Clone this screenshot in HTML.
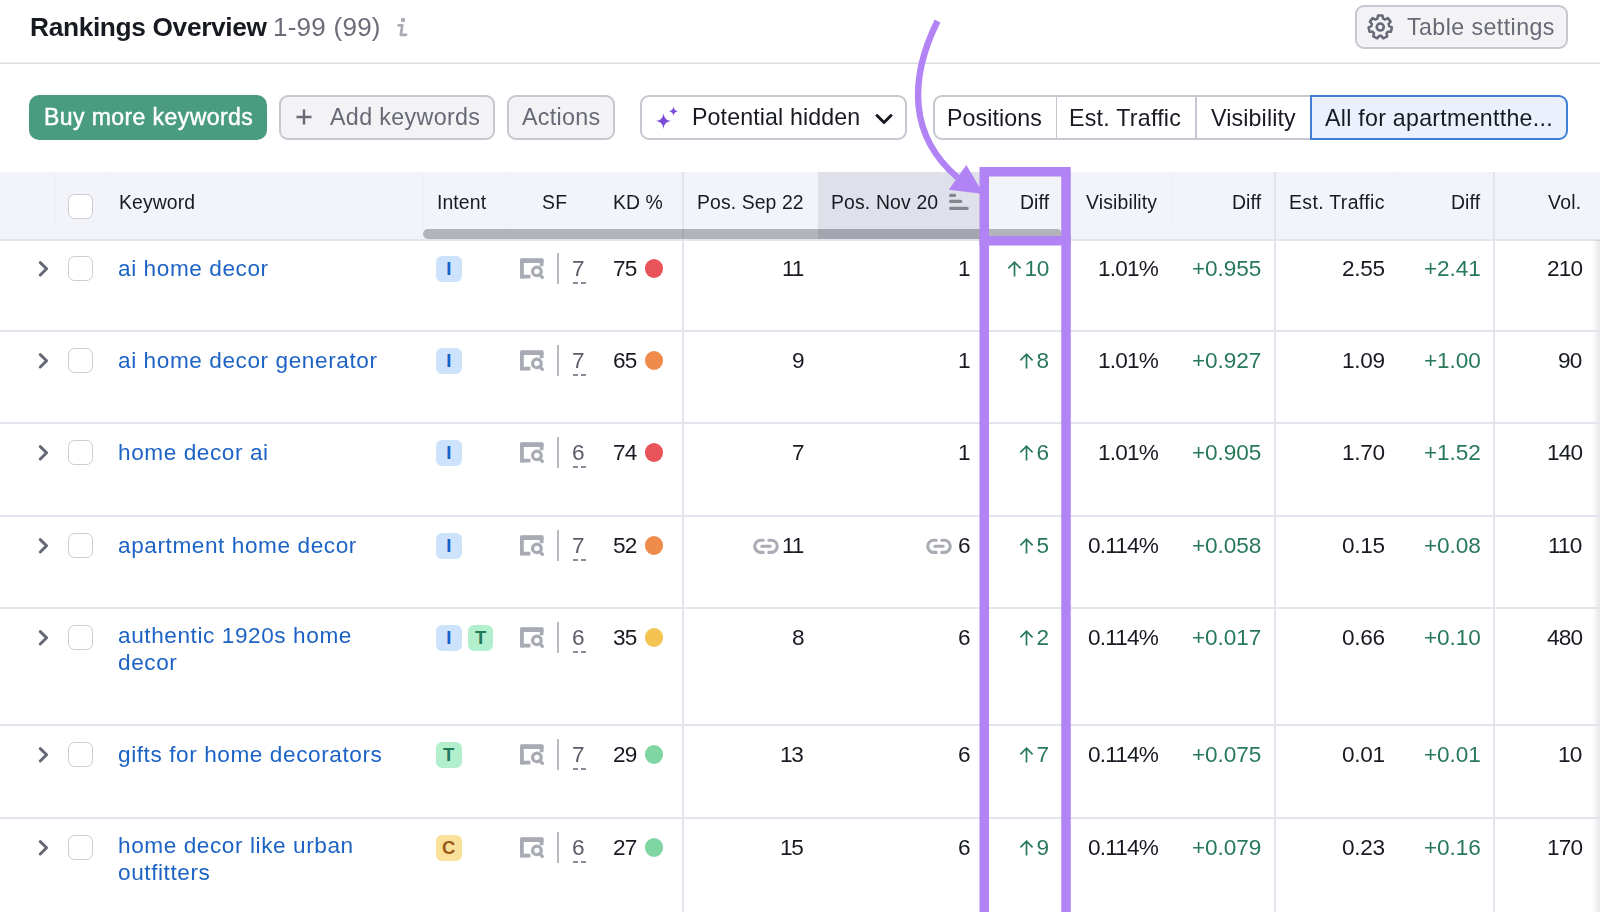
<!DOCTYPE html>
<html><head><meta charset="utf-8"><title>Rankings Overview</title>
<style>
html,body{margin:0;padding:0;}
body{width:1600px;height:912px;overflow:hidden;position:relative;background:#fff;font-family:"Liberation Sans",sans-serif;}
.t{position:absolute;white-space:nowrap;will-change:transform;}
.r{position:absolute;}
.badge{width:25.5px;height:25.7px;border-radius:6px;font-weight:bold;font-size:18.5px;line-height:26.5px;text-align:center;}
.arr{vertical-align:-1px;margin-right:2.6px;}
</style></head><body>
<div class="t" style="top:9.88px;font-size:26.3px;line-height:34px;color:#181a22;font-weight:bold;letter-spacing:-0.35px;left:29.50px;">Rankings Overview</div>
<div class="t" style="top:9.99px;font-size:26px;line-height:34px;color:#6b6d79;letter-spacing:0.25px;left:272.50px;">1-99 (99)</div>
<svg class="r" style="left:394px;top:15px" width="18" height="24" viewBox="0 0 18 24"><circle cx="9" cy="5" r="2.2" fill="#a9abb5"/><path d="M4.6 10.4H8.3L6.8 19.8H12.1" fill="none" stroke="#a9abb5" stroke-width="2.7" stroke-linecap="round" stroke-linejoin="round"/></svg>
<div class="r" style="left:0px;top:62px;width:1600px;height:1px;background:#ebebf0;"></div>
<div class="r" style="left:0px;top:63px;width:1600px;height:1px;background:#dddee4;"></div>
<div class="r" style="left:1355px;top:5px;width:213px;height:44px;background:#f3f3f6;border:2px solid #c6c8d0;border-radius:9px;box-sizing:border-box;"></div>
<svg class="r" style="left:1367px;top:14px" width="26.5" height="26.5" viewBox="0 0 25 25"><path fill="none" stroke="#676a76" stroke-width="2.4" stroke-linejoin="round" d="M9.77 4.36 L10.40 1.50 L14.60 1.50 L15.23 4.36 L17.00 5.21 L19.63 3.93 L22.25 7.21 L20.41 9.49 L20.85 11.40 L23.49 12.66 L22.56 16.75 L19.63 16.73 L18.41 18.27 L19.08 21.12 L15.29 22.94 L13.48 20.64 L11.52 20.64 L9.71 22.94 L5.92 21.12 L6.59 18.27 L5.37 16.73 L2.44 16.75 L1.51 12.66 L4.15 11.40 L4.59 9.49 L2.75 7.21 L5.37 3.93 L8.00 5.21Z"/><circle cx="12.5" cy="12.3" r="3.3" fill="none" stroke="#676a76" stroke-width="2.5"/></svg>
<div class="t" style="top:12.26px;font-size:23.2px;line-height:30px;color:#676a76;letter-spacing:0.43px;left:1406.50px;">Table settings</div>
<div class="r" style="left:29px;top:95px;width:238px;height:45px;background:#499c80;border-radius:10px;"></div>
<div class="t" style="top:102.33px;font-size:23px;line-height:30px;color:#ffffff;letter-spacing:0.42px;left:43.50px;-webkit-text-stroke:0.45px #fff;">Buy more keywords</div>
<div class="r" style="left:279px;top:95px;width:215.5px;height:45px;background:#f3f3f6;border:2px solid #c6c8d0;border-radius:9px;box-sizing:border-box;"></div>
<svg class="r" style="left:295px;top:108px" width="18" height="18" viewBox="0 0 18 18"><path d="M9 1.5V16.5M1.5 9H16.5" stroke="#676a76" stroke-width="2.4"/></svg>
<div class="t" style="top:101.72px;font-size:23.3px;line-height:30px;color:#676a76;letter-spacing:0.33px;left:330.00px;">Add keywords</div>
<div class="r" style="left:507px;top:95px;width:108px;height:45px;background:#f3f3f6;border:2px solid #c6c8d0;border-radius:9px;box-sizing:border-box;"></div>
<div class="t" style="top:101.72px;font-size:23.3px;line-height:30px;color:#676a76;letter-spacing:0.3px;left:521.70px;">Actions</div>
<div class="r" style="left:640px;top:95px;width:267px;height:45px;background:#ffffff;border:2px solid #c6c8d0;border-radius:9px;box-sizing:border-box;"></div>
<svg class="r" style="left:655px;top:106px" width="25" height="24" viewBox="0 0 25 24"><path fill="#7a4bd9" d="M8.50 7.20C9.29 12.33 11.27 14.31 16.40 15.10C11.27 15.89 9.29 17.86 8.50 23.00C7.71 17.86 5.73 15.89 0.60 15.10C5.73 14.31 7.71 12.33 8.50 7.20Z"/><path fill="#7a4bd9" d="M18.50 0.60C18.97 3.65 20.14 4.83 23.20 5.30C20.14 5.77 18.97 6.95 18.50 10.00C18.03 6.95 16.86 5.77 13.80 5.30C16.86 4.83 18.03 3.65 18.50 0.60Z"/></svg>
<div class="t" style="top:101.76px;font-size:23.2px;line-height:30px;color:#181a22;letter-spacing:0.12px;left:692.00px;">Potential hidden</div>
<svg class="r" style="left:874px;top:112px" width="20" height="14" viewBox="0 0 20 14"><path d="M3 3.5 L10 10.5 L17 3.5" fill="none" stroke="#181a22" stroke-width="3" stroke-linecap="round" stroke-linejoin="round"/></svg>
<div class="r" style="left:933px;top:95px;width:387px;height:45px;background:#ffffff;border:2px solid #c6c8d0;border-radius:9px 0 0 9px;box-sizing:border-box;"></div>
<div class="r" style="left:1055.5px;top:95px;width:1.5px;height:45px;background:#c6c8d0;"></div>
<div class="r" style="left:1195px;top:95px;width:1.5px;height:45px;background:#c6c8d0;"></div>
<div class="t" style="top:103.46px;font-size:23.2px;line-height:30px;color:#181a22;letter-spacing:0.1px;left:947.00px;">Positions</div>
<div class="t" style="top:103.46px;font-size:23.2px;line-height:30px;color:#181a22;letter-spacing:0.25px;left:1069.00px;">Est. Traffic</div>
<div class="t" style="top:103.46px;font-size:23.2px;line-height:30px;color:#181a22;letter-spacing:0.15px;left:1210.50px;">Visibility</div>
<div class="r" style="left:1310px;top:95px;width:258px;height:45px;background:#eaf1fd;border:2px solid #3f7fd8;border-radius:0 9px 9px 0;box-sizing:border-box;"></div>
<div class="t" style="top:103.46px;font-size:23.2px;line-height:30px;color:#181a22;letter-spacing:0.27px;left:1325.00px;">All for apartmentthe...</div>
<div class="r" style="left:0px;top:172px;width:1600px;height:67px;background:#f3f4f9;"></div>
<div class="r" style="left:817.5px;top:172px;width:162.5px;height:67px;background:#dfe0e9;"></div>
<div class="r" style="left:55px;top:172px;width:1px;height:57px;background:#eff0f5;"></div>
<div class="r" style="left:105px;top:172px;width:1px;height:57px;background:#eff0f5;"></div>
<div class="r" style="left:423px;top:172px;width:1px;height:57px;background:#eff0f5;"></div>
<div class="r" style="left:505.5px;top:172px;width:1.0px;height:57px;background:#eff0f5;"></div>
<div class="r" style="left:1172px;top:172px;width:1px;height:57px;background:#eff0f5;"></div>
<div class="r" style="left:1397.5px;top:172px;width:1.0px;height:57px;background:#eff0f5;"></div>
<div class="r" style="left:0px;top:238.5px;width:1600px;height:2.0px;background:#e4e4ec;"></div>
<div class="r" style="left:67.5px;top:194px;width:25.0px;height:25px;background:#fff;border:1.7px solid #cacbd3;border-radius:6.5px;box-sizing:border-box;"></div>
<div class="t" style="top:190.47px;font-size:19.4px;line-height:25px;color:#181a22;letter-spacing:0.1px;left:119.20px;">Keyword</div>
<div class="t" style="top:190.47px;font-size:19.4px;line-height:25px;color:#181a22;letter-spacing:0.1px;left:436.60px;">Intent</div>
<div class="t" style="top:190.47px;font-size:19.4px;line-height:25px;color:#181a22;letter-spacing:0.4px;left:541.60px;">SF</div>
<div class="t" style="top:190.47px;font-size:19.4px;line-height:25px;color:#181a22;letter-spacing:0.1px;left:613.40px;">KD %</div>
<div class="t" style="top:190.47px;font-size:19.4px;line-height:25px;color:#181a22;letter-spacing:0.1px;left:697.40px;">Pos. Sep 22</div>
<div class="t" style="top:190.47px;font-size:19.4px;line-height:25px;color:#181a22;letter-spacing:0.15px;left:830.80px;">Pos. Nov 20</div>
<svg class="r" style="left:948px;top:192px" width="22" height="19" viewBox="0 0 22 19"><path d="M2.6 3.3H6.6M2.6 9.4H12.8M2.6 16.3H19.2" stroke="#85878f" stroke-width="3.2" stroke-linecap="round"/></svg>
<div class="t" style="top:190.47px;font-size:19.4px;line-height:25px;color:#181a22;letter-spacing:0.1px;right:550.50px;text-align:right;">Diff</div>
<div class="t" style="top:190.47px;font-size:19.4px;line-height:25px;color:#181a22;letter-spacing:0.15px;left:1085.90px;">Visibility</div>
<div class="t" style="top:190.47px;font-size:19.4px;line-height:25px;color:#181a22;letter-spacing:0.1px;right:339.00px;text-align:right;">Diff</div>
<div class="t" style="top:190.47px;font-size:19.4px;line-height:25px;color:#181a22;letter-spacing:0.38px;left:1289.00px;">Est. Traffic</div>
<div class="t" style="top:190.47px;font-size:19.4px;line-height:25px;color:#181a22;letter-spacing:0.1px;right:119.50px;text-align:right;">Diff</div>
<div class="t" style="top:190.47px;font-size:19.4px;line-height:25px;color:#181a22;letter-spacing:0.3px;right:18.00px;text-align:right;">Vol.</div>
<div class="r" style="left:0px;top:330px;width:1600px;height:2px;background:#e4e4ec;"></div>
<div class="r" style="left:1592px;top:240px;width:8px;height:90px;background:linear-gradient(to right, rgba(0,0,0,0), rgba(0,0,0,0.09));"></div>
<svg class="r" style="left:37px;top:259.5px" width="13" height="18" viewBox="0 0 13 18"><path d="M3.3 2.6 L9.6 8.8 L3.3 15" fill="none" stroke="#666975" stroke-width="3" stroke-linecap="round" stroke-linejoin="round"/></svg>
<div class="r" style="left:67.5px;top:256px;width:25.0px;height:25px;background:#fff;border:1.7px solid #cacbd3;border-radius:6.5px;box-sizing:border-box;"></div>
<div class="t" style="top:254.06px;font-size:22.6px;line-height:29px;color:#1d63c5;letter-spacing:0.58px;left:118.00px;">ai home decor</div>
<div class="r badge" style="left:436.0px;top:256.2px;background:#cce3fb;color:#1a5fc9;">I</div>
<svg class="r" style="left:520px;top:258.3px" width="25" height="22" viewBox="0 0 25 22"><path d="M1.9 20.5V2.6H21.6V8.2" fill="none" stroke="#a8aab4" stroke-width="3.8" stroke-linejoin="round"/><path d="M0.2 1.5Q0.2 0.2 1.5 0.2H22.2Q23.5 0.2 23.5 1.5V5H0.2Z" fill="#a8aab4"/><path d="M1.9 18.6H10.4" stroke="#a8aab4" stroke-width="3.8"/><circle cx="16.9" cy="13.4" r="4.3" fill="none" stroke="#a8aab4" stroke-width="3.3"/><path d="M19.6 16.4L22.4 19.4" stroke="#a8aab4" stroke-width="3.2" stroke-linecap="round"/></svg>
<div class="r" style="left:557px;top:252.5px;width:1.7999999999999545px;height:31.5px;background:#b8bac2;"></div>
<div class="t" style="top:254.06px;font-size:22.6px;line-height:29px;color:#5a5d69;left:572.30px;">7</div>
<div class="r" style="left:572.5px;top:281.5px;width:13px;height:2px;background:repeating-linear-gradient(to right,#8a8c97 0 5px,transparent 5px 8.5px);"></div>
<div class="t" style="top:254.06px;font-size:22.6px;line-height:29px;color:#181a22;letter-spacing:-0.9px;left:613.20px;">75</div>
<div class="r" style="left:644.5px;top:259.1px;width:18.6px;height:18.6px;border-radius:50%;background:#e9545a;"></div>
<div class="t" style="top:254.06px;font-size:22.6px;line-height:29px;color:#181a22;letter-spacing:-1.2px;right:797.00px;text-align:right;">11</div>
<div class="t" style="top:254.06px;font-size:22.6px;line-height:29px;color:#181a22;letter-spacing:-1.2px;right:630.40px;text-align:right;">1</div>
<div class="t" style="top:254.06px;font-size:22.6px;line-height:29px;color:#28795a;letter-spacing:-0.3px;right:551.00px;text-align:right;"><svg class="arr" width="15" height="17" viewBox="0 0 15 17"><path d="M7.5 16.6V2.3M1.4 8.3L7.5 2.2L13.6 8.3" fill="none" stroke="#28795a" stroke-width="1.7"/></svg>10</div>
<div class="t" style="top:254.06px;font-size:22.6px;line-height:29px;color:#181a22;letter-spacing:-0.8px;right:442.00px;text-align:right;">1.01%</div>
<div class="t" style="top:254.06px;font-size:22.6px;line-height:29px;color:#28795a;letter-spacing:-0.1px;right:339.00px;text-align:right;">+0.955</div>
<div class="t" style="top:254.06px;font-size:22.6px;line-height:29px;color:#181a22;letter-spacing:-0.3px;right:215.50px;text-align:right;">2.55</div>
<div class="t" style="top:254.06px;font-size:22.6px;line-height:29px;color:#28795a;letter-spacing:-0.1px;right:119.50px;text-align:right;">+2.41</div>
<div class="t" style="top:254.06px;font-size:22.6px;line-height:29px;color:#181a22;letter-spacing:-0.8px;right:18.00px;text-align:right;">210</div>
<div class="r" style="left:0px;top:422px;width:1600px;height:2px;background:#e4e4ec;"></div>
<div class="r" style="left:1592px;top:332px;width:8px;height:90px;background:linear-gradient(to right, rgba(0,0,0,0), rgba(0,0,0,0.09));"></div>
<svg class="r" style="left:37px;top:351.5px" width="13" height="18" viewBox="0 0 13 18"><path d="M3.3 2.6 L9.6 8.8 L3.3 15" fill="none" stroke="#666975" stroke-width="3" stroke-linecap="round" stroke-linejoin="round"/></svg>
<div class="r" style="left:67.5px;top:348px;width:25.0px;height:25px;background:#fff;border:1.7px solid #cacbd3;border-radius:6.5px;box-sizing:border-box;"></div>
<div class="t" style="top:346.06px;font-size:22.6px;line-height:29px;color:#1d63c5;letter-spacing:0.58px;left:118.00px;">ai home decor generator</div>
<div class="r badge" style="left:436.0px;top:348.2px;background:#cce3fb;color:#1a5fc9;">I</div>
<svg class="r" style="left:520px;top:350.3px" width="25" height="22" viewBox="0 0 25 22"><path d="M1.9 20.5V2.6H21.6V8.2" fill="none" stroke="#a8aab4" stroke-width="3.8" stroke-linejoin="round"/><path d="M0.2 1.5Q0.2 0.2 1.5 0.2H22.2Q23.5 0.2 23.5 1.5V5H0.2Z" fill="#a8aab4"/><path d="M1.9 18.6H10.4" stroke="#a8aab4" stroke-width="3.8"/><circle cx="16.9" cy="13.4" r="4.3" fill="none" stroke="#a8aab4" stroke-width="3.3"/><path d="M19.6 16.4L22.4 19.4" stroke="#a8aab4" stroke-width="3.2" stroke-linecap="round"/></svg>
<div class="r" style="left:557px;top:344.5px;width:1.7999999999999545px;height:31.5px;background:#b8bac2;"></div>
<div class="t" style="top:346.06px;font-size:22.6px;line-height:29px;color:#5a5d69;left:572.30px;">7</div>
<div class="r" style="left:572.5px;top:373.5px;width:13px;height:2px;background:repeating-linear-gradient(to right,#8a8c97 0 5px,transparent 5px 8.5px);"></div>
<div class="t" style="top:346.06px;font-size:22.6px;line-height:29px;color:#181a22;letter-spacing:-0.9px;left:613.20px;">65</div>
<div class="r" style="left:644.5px;top:351.1px;width:18.6px;height:18.6px;border-radius:50%;background:#ef8c4c;"></div>
<div class="t" style="top:346.06px;font-size:22.6px;line-height:29px;color:#181a22;letter-spacing:-1.2px;right:797.00px;text-align:right;">9</div>
<div class="t" style="top:346.06px;font-size:22.6px;line-height:29px;color:#181a22;letter-spacing:-1.2px;right:630.40px;text-align:right;">1</div>
<div class="t" style="top:346.06px;font-size:22.6px;line-height:29px;color:#28795a;letter-spacing:-0.3px;right:551.00px;text-align:right;"><svg class="arr" width="15" height="17" viewBox="0 0 15 17"><path d="M7.5 16.6V2.3M1.4 8.3L7.5 2.2L13.6 8.3" fill="none" stroke="#28795a" stroke-width="1.7"/></svg>8</div>
<div class="t" style="top:346.06px;font-size:22.6px;line-height:29px;color:#181a22;letter-spacing:-0.8px;right:442.00px;text-align:right;">1.01%</div>
<div class="t" style="top:346.06px;font-size:22.6px;line-height:29px;color:#28795a;letter-spacing:-0.1px;right:339.00px;text-align:right;">+0.927</div>
<div class="t" style="top:346.06px;font-size:22.6px;line-height:29px;color:#181a22;letter-spacing:-0.3px;right:215.50px;text-align:right;">1.09</div>
<div class="t" style="top:346.06px;font-size:22.6px;line-height:29px;color:#28795a;letter-spacing:-0.1px;right:119.50px;text-align:right;">+1.00</div>
<div class="t" style="top:346.06px;font-size:22.6px;line-height:29px;color:#181a22;letter-spacing:-0.8px;right:18.00px;text-align:right;">90</div>
<div class="r" style="left:0px;top:515px;width:1600px;height:2px;background:#e4e4ec;"></div>
<div class="r" style="left:1592px;top:424px;width:8px;height:91px;background:linear-gradient(to right, rgba(0,0,0,0), rgba(0,0,0,0.09));"></div>
<svg class="r" style="left:37px;top:443.5px" width="13" height="18" viewBox="0 0 13 18"><path d="M3.3 2.6 L9.6 8.8 L3.3 15" fill="none" stroke="#666975" stroke-width="3" stroke-linecap="round" stroke-linejoin="round"/></svg>
<div class="r" style="left:67.5px;top:440px;width:25.0px;height:25px;background:#fff;border:1.7px solid #cacbd3;border-radius:6.5px;box-sizing:border-box;"></div>
<div class="t" style="top:438.06px;font-size:22.6px;line-height:29px;color:#1d63c5;letter-spacing:0.58px;left:118.00px;">home decor ai</div>
<div class="r badge" style="left:436.0px;top:440.2px;background:#cce3fb;color:#1a5fc9;">I</div>
<svg class="r" style="left:520px;top:442.3px" width="25" height="22" viewBox="0 0 25 22"><path d="M1.9 20.5V2.6H21.6V8.2" fill="none" stroke="#a8aab4" stroke-width="3.8" stroke-linejoin="round"/><path d="M0.2 1.5Q0.2 0.2 1.5 0.2H22.2Q23.5 0.2 23.5 1.5V5H0.2Z" fill="#a8aab4"/><path d="M1.9 18.6H10.4" stroke="#a8aab4" stroke-width="3.8"/><circle cx="16.9" cy="13.4" r="4.3" fill="none" stroke="#a8aab4" stroke-width="3.3"/><path d="M19.6 16.4L22.4 19.4" stroke="#a8aab4" stroke-width="3.2" stroke-linecap="round"/></svg>
<div class="r" style="left:557px;top:436.5px;width:1.7999999999999545px;height:31.5px;background:#b8bac2;"></div>
<div class="t" style="top:438.06px;font-size:22.6px;line-height:29px;color:#5a5d69;left:572.30px;">6</div>
<div class="r" style="left:572.5px;top:465.5px;width:13px;height:2px;background:repeating-linear-gradient(to right,#8a8c97 0 5px,transparent 5px 8.5px);"></div>
<div class="t" style="top:438.06px;font-size:22.6px;line-height:29px;color:#181a22;letter-spacing:-0.9px;left:613.20px;">74</div>
<div class="r" style="left:644.5px;top:443.1px;width:18.6px;height:18.6px;border-radius:50%;background:#e9545a;"></div>
<div class="t" style="top:438.06px;font-size:22.6px;line-height:29px;color:#181a22;letter-spacing:-1.2px;right:797.00px;text-align:right;">7</div>
<div class="t" style="top:438.06px;font-size:22.6px;line-height:29px;color:#181a22;letter-spacing:-1.2px;right:630.40px;text-align:right;">1</div>
<div class="t" style="top:438.06px;font-size:22.6px;line-height:29px;color:#28795a;letter-spacing:-0.3px;right:551.00px;text-align:right;"><svg class="arr" width="15" height="17" viewBox="0 0 15 17"><path d="M7.5 16.6V2.3M1.4 8.3L7.5 2.2L13.6 8.3" fill="none" stroke="#28795a" stroke-width="1.7"/></svg>6</div>
<div class="t" style="top:438.06px;font-size:22.6px;line-height:29px;color:#181a22;letter-spacing:-0.8px;right:442.00px;text-align:right;">1.01%</div>
<div class="t" style="top:438.06px;font-size:22.6px;line-height:29px;color:#28795a;letter-spacing:-0.1px;right:339.00px;text-align:right;">+0.905</div>
<div class="t" style="top:438.06px;font-size:22.6px;line-height:29px;color:#181a22;letter-spacing:-0.3px;right:215.50px;text-align:right;">1.70</div>
<div class="t" style="top:438.06px;font-size:22.6px;line-height:29px;color:#28795a;letter-spacing:-0.1px;right:119.50px;text-align:right;">+1.52</div>
<div class="t" style="top:438.06px;font-size:22.6px;line-height:29px;color:#181a22;letter-spacing:-0.8px;right:18.00px;text-align:right;">140</div>
<div class="r" style="left:0px;top:607px;width:1600px;height:2px;background:#e4e4ec;"></div>
<div class="r" style="left:1592px;top:517px;width:8px;height:90px;background:linear-gradient(to right, rgba(0,0,0,0), rgba(0,0,0,0.09));"></div>
<svg class="r" style="left:37px;top:536.5px" width="13" height="18" viewBox="0 0 13 18"><path d="M3.3 2.6 L9.6 8.8 L3.3 15" fill="none" stroke="#666975" stroke-width="3" stroke-linecap="round" stroke-linejoin="round"/></svg>
<div class="r" style="left:67.5px;top:533px;width:25.0px;height:25px;background:#fff;border:1.7px solid #cacbd3;border-radius:6.5px;box-sizing:border-box;"></div>
<div class="t" style="top:531.06px;font-size:22.6px;line-height:29px;color:#1d63c5;letter-spacing:0.58px;left:118.00px;">apartment home decor</div>
<div class="r badge" style="left:436.0px;top:533.2px;background:#cce3fb;color:#1a5fc9;">I</div>
<svg class="r" style="left:520px;top:535.3px" width="25" height="22" viewBox="0 0 25 22"><path d="M1.9 20.5V2.6H21.6V8.2" fill="none" stroke="#a8aab4" stroke-width="3.8" stroke-linejoin="round"/><path d="M0.2 1.5Q0.2 0.2 1.5 0.2H22.2Q23.5 0.2 23.5 1.5V5H0.2Z" fill="#a8aab4"/><path d="M1.9 18.6H10.4" stroke="#a8aab4" stroke-width="3.8"/><circle cx="16.9" cy="13.4" r="4.3" fill="none" stroke="#a8aab4" stroke-width="3.3"/><path d="M19.6 16.4L22.4 19.4" stroke="#a8aab4" stroke-width="3.2" stroke-linecap="round"/></svg>
<div class="r" style="left:557px;top:529.5px;width:1.7999999999999545px;height:31.5px;background:#b8bac2;"></div>
<div class="t" style="top:531.06px;font-size:22.6px;line-height:29px;color:#5a5d69;left:572.30px;">7</div>
<div class="r" style="left:572.5px;top:558.5px;width:13px;height:2px;background:repeating-linear-gradient(to right,#8a8c97 0 5px,transparent 5px 8.5px);"></div>
<div class="t" style="top:531.06px;font-size:22.6px;line-height:29px;color:#181a22;letter-spacing:-0.9px;left:613.20px;">52</div>
<div class="r" style="left:644.5px;top:536.1px;width:18.6px;height:18.6px;border-radius:50%;background:#ef8c4c;"></div>
<svg class="r" style="left:752.5px;top:537.5px" width="26" height="17" viewBox="0 0 26 17"><path d="M10.2 2.2 H7.8 A6.1 6.1 0 0 0 7.8 14.4 H10.2 M15.8 2.2 H18.2 A6.1 6.1 0 0 1 18.2 14.4 H15.8 M8.8 8.3 H17.2" fill="none" stroke="#a9abb5" stroke-width="3.1" stroke-linecap="round"/></svg>
<svg class="r" style="left:925.5px;top:537.5px" width="26" height="17" viewBox="0 0 26 17"><path d="M10.2 2.2 H7.8 A6.1 6.1 0 0 0 7.8 14.4 H10.2 M15.8 2.2 H18.2 A6.1 6.1 0 0 1 18.2 14.4 H15.8 M8.8 8.3 H17.2" fill="none" stroke="#a9abb5" stroke-width="3.1" stroke-linecap="round"/></svg>
<div class="t" style="top:531.06px;font-size:22.6px;line-height:29px;color:#181a22;letter-spacing:-1.2px;right:797.00px;text-align:right;">11</div>
<div class="t" style="top:531.06px;font-size:22.6px;line-height:29px;color:#181a22;letter-spacing:-1.2px;right:630.40px;text-align:right;">6</div>
<div class="t" style="top:531.06px;font-size:22.6px;line-height:29px;color:#28795a;letter-spacing:-0.3px;right:551.00px;text-align:right;"><svg class="arr" width="15" height="17" viewBox="0 0 15 17"><path d="M7.5 16.6V2.3M1.4 8.3L7.5 2.2L13.6 8.3" fill="none" stroke="#28795a" stroke-width="1.7"/></svg>5</div>
<div class="t" style="top:531.06px;font-size:22.6px;line-height:29px;color:#181a22;letter-spacing:-0.8px;right:442.00px;text-align:right;">0.114%</div>
<div class="t" style="top:531.06px;font-size:22.6px;line-height:29px;color:#28795a;letter-spacing:-0.1px;right:339.00px;text-align:right;">+0.058</div>
<div class="t" style="top:531.06px;font-size:22.6px;line-height:29px;color:#181a22;letter-spacing:-0.3px;right:215.50px;text-align:right;">0.15</div>
<div class="t" style="top:531.06px;font-size:22.6px;line-height:29px;color:#28795a;letter-spacing:-0.1px;right:119.50px;text-align:right;">+0.08</div>
<div class="t" style="top:531.06px;font-size:22.6px;line-height:29px;color:#181a22;letter-spacing:-0.8px;right:18.00px;text-align:right;">110</div>
<div class="r" style="left:0px;top:724px;width:1600px;height:2px;background:#e4e4ec;"></div>
<div class="r" style="left:1592px;top:609px;width:8px;height:115px;background:linear-gradient(to right, rgba(0,0,0,0), rgba(0,0,0,0.09));"></div>
<svg class="r" style="left:37px;top:628.5px" width="13" height="18" viewBox="0 0 13 18"><path d="M3.3 2.6 L9.6 8.8 L3.3 15" fill="none" stroke="#666975" stroke-width="3" stroke-linecap="round" stroke-linejoin="round"/></svg>
<div class="r" style="left:67.5px;top:625px;width:25.0px;height:25px;background:#fff;border:1.7px solid #cacbd3;border-radius:6.5px;box-sizing:border-box;"></div>
<div class="t" style="top:621.26px;font-size:22.6px;line-height:29px;color:#1d63c5;letter-spacing:0.58px;left:118.00px;">authentic 1920s home</div>
<div class="t" style="top:647.96px;font-size:22.6px;line-height:29px;color:#1d63c5;letter-spacing:0.58px;left:118.00px;">decor</div>
<div class="r badge" style="left:436.0px;top:625.2px;background:#cce3fb;color:#1a5fc9;">I</div>
<div class="r badge" style="left:467.8px;top:625.2px;background:#b2f0cd;color:#24785a;">T</div>
<svg class="r" style="left:520px;top:627.3px" width="25" height="22" viewBox="0 0 25 22"><path d="M1.9 20.5V2.6H21.6V8.2" fill="none" stroke="#a8aab4" stroke-width="3.8" stroke-linejoin="round"/><path d="M0.2 1.5Q0.2 0.2 1.5 0.2H22.2Q23.5 0.2 23.5 1.5V5H0.2Z" fill="#a8aab4"/><path d="M1.9 18.6H10.4" stroke="#a8aab4" stroke-width="3.8"/><circle cx="16.9" cy="13.4" r="4.3" fill="none" stroke="#a8aab4" stroke-width="3.3"/><path d="M19.6 16.4L22.4 19.4" stroke="#a8aab4" stroke-width="3.2" stroke-linecap="round"/></svg>
<div class="r" style="left:557px;top:621.5px;width:1.7999999999999545px;height:31.5px;background:#b8bac2;"></div>
<div class="t" style="top:623.06px;font-size:22.6px;line-height:29px;color:#5a5d69;left:572.30px;">6</div>
<div class="r" style="left:572.5px;top:650.5px;width:13px;height:2px;background:repeating-linear-gradient(to right,#8a8c97 0 5px,transparent 5px 8.5px);"></div>
<div class="t" style="top:623.06px;font-size:22.6px;line-height:29px;color:#181a22;letter-spacing:-0.9px;left:613.20px;">35</div>
<div class="r" style="left:644.5px;top:628.1px;width:18.6px;height:18.6px;border-radius:50%;background:#f4c452;"></div>
<div class="t" style="top:623.06px;font-size:22.6px;line-height:29px;color:#181a22;letter-spacing:-1.2px;right:797.00px;text-align:right;">8</div>
<div class="t" style="top:623.06px;font-size:22.6px;line-height:29px;color:#181a22;letter-spacing:-1.2px;right:630.40px;text-align:right;">6</div>
<div class="t" style="top:623.06px;font-size:22.6px;line-height:29px;color:#28795a;letter-spacing:-0.3px;right:551.00px;text-align:right;"><svg class="arr" width="15" height="17" viewBox="0 0 15 17"><path d="M7.5 16.6V2.3M1.4 8.3L7.5 2.2L13.6 8.3" fill="none" stroke="#28795a" stroke-width="1.7"/></svg>2</div>
<div class="t" style="top:623.06px;font-size:22.6px;line-height:29px;color:#181a22;letter-spacing:-0.8px;right:442.00px;text-align:right;">0.114%</div>
<div class="t" style="top:623.06px;font-size:22.6px;line-height:29px;color:#28795a;letter-spacing:-0.1px;right:339.00px;text-align:right;">+0.017</div>
<div class="t" style="top:623.06px;font-size:22.6px;line-height:29px;color:#181a22;letter-spacing:-0.3px;right:215.50px;text-align:right;">0.66</div>
<div class="t" style="top:623.06px;font-size:22.6px;line-height:29px;color:#28795a;letter-spacing:-0.1px;right:119.50px;text-align:right;">+0.10</div>
<div class="t" style="top:623.06px;font-size:22.6px;line-height:29px;color:#181a22;letter-spacing:-0.8px;right:18.00px;text-align:right;">480</div>
<div class="r" style="left:0px;top:817px;width:1600px;height:2px;background:#e4e4ec;"></div>
<div class="r" style="left:1592px;top:726px;width:8px;height:91px;background:linear-gradient(to right, rgba(0,0,0,0), rgba(0,0,0,0.09));"></div>
<svg class="r" style="left:37px;top:745.5px" width="13" height="18" viewBox="0 0 13 18"><path d="M3.3 2.6 L9.6 8.8 L3.3 15" fill="none" stroke="#666975" stroke-width="3" stroke-linecap="round" stroke-linejoin="round"/></svg>
<div class="r" style="left:67.5px;top:742px;width:25.0px;height:25px;background:#fff;border:1.7px solid #cacbd3;border-radius:6.5px;box-sizing:border-box;"></div>
<div class="t" style="top:740.06px;font-size:22.6px;line-height:29px;color:#1d63c5;letter-spacing:0.58px;left:118.00px;">gifts for home decorators</div>
<div class="r badge" style="left:436.0px;top:742.2px;background:#b2f0cd;color:#24785a;">T</div>
<svg class="r" style="left:520px;top:744.3px" width="25" height="22" viewBox="0 0 25 22"><path d="M1.9 20.5V2.6H21.6V8.2" fill="none" stroke="#a8aab4" stroke-width="3.8" stroke-linejoin="round"/><path d="M0.2 1.5Q0.2 0.2 1.5 0.2H22.2Q23.5 0.2 23.5 1.5V5H0.2Z" fill="#a8aab4"/><path d="M1.9 18.6H10.4" stroke="#a8aab4" stroke-width="3.8"/><circle cx="16.9" cy="13.4" r="4.3" fill="none" stroke="#a8aab4" stroke-width="3.3"/><path d="M19.6 16.4L22.4 19.4" stroke="#a8aab4" stroke-width="3.2" stroke-linecap="round"/></svg>
<div class="r" style="left:557px;top:738.5px;width:1.7999999999999545px;height:31.5px;background:#b8bac2;"></div>
<div class="t" style="top:740.06px;font-size:22.6px;line-height:29px;color:#5a5d69;left:572.30px;">7</div>
<div class="r" style="left:572.5px;top:767.5px;width:13px;height:2px;background:repeating-linear-gradient(to right,#8a8c97 0 5px,transparent 5px 8.5px);"></div>
<div class="t" style="top:740.06px;font-size:22.6px;line-height:29px;color:#181a22;letter-spacing:-0.9px;left:613.20px;">29</div>
<div class="r" style="left:644.5px;top:745.1px;width:18.6px;height:18.6px;border-radius:50%;background:#80d6a2;"></div>
<div class="t" style="top:740.06px;font-size:22.6px;line-height:29px;color:#181a22;letter-spacing:-1.2px;right:797.00px;text-align:right;">13</div>
<div class="t" style="top:740.06px;font-size:22.6px;line-height:29px;color:#181a22;letter-spacing:-1.2px;right:630.40px;text-align:right;">6</div>
<div class="t" style="top:740.06px;font-size:22.6px;line-height:29px;color:#28795a;letter-spacing:-0.3px;right:551.00px;text-align:right;"><svg class="arr" width="15" height="17" viewBox="0 0 15 17"><path d="M7.5 16.6V2.3M1.4 8.3L7.5 2.2L13.6 8.3" fill="none" stroke="#28795a" stroke-width="1.7"/></svg>7</div>
<div class="t" style="top:740.06px;font-size:22.6px;line-height:29px;color:#181a22;letter-spacing:-0.8px;right:442.00px;text-align:right;">0.114%</div>
<div class="t" style="top:740.06px;font-size:22.6px;line-height:29px;color:#28795a;letter-spacing:-0.1px;right:339.00px;text-align:right;">+0.075</div>
<div class="t" style="top:740.06px;font-size:22.6px;line-height:29px;color:#181a22;letter-spacing:-0.3px;right:215.50px;text-align:right;">0.01</div>
<div class="t" style="top:740.06px;font-size:22.6px;line-height:29px;color:#28795a;letter-spacing:-0.1px;right:119.50px;text-align:right;">+0.01</div>
<div class="t" style="top:740.06px;font-size:22.6px;line-height:29px;color:#181a22;letter-spacing:-0.8px;right:18.00px;text-align:right;">10</div>
<div class="r" style="left:0px;top:917px;width:1600px;height:2px;background:#e4e4ec;"></div>
<div class="r" style="left:1592px;top:819px;width:8px;height:98px;background:linear-gradient(to right, rgba(0,0,0,0), rgba(0,0,0,0.09));"></div>
<svg class="r" style="left:37px;top:838.5px" width="13" height="18" viewBox="0 0 13 18"><path d="M3.3 2.6 L9.6 8.8 L3.3 15" fill="none" stroke="#666975" stroke-width="3" stroke-linecap="round" stroke-linejoin="round"/></svg>
<div class="r" style="left:67.5px;top:835px;width:25.0px;height:25px;background:#fff;border:1.7px solid #cacbd3;border-radius:6.5px;box-sizing:border-box;"></div>
<div class="t" style="top:831.26px;font-size:22.6px;line-height:29px;color:#1d63c5;letter-spacing:0.58px;left:118.00px;">home decor like urban</div>
<div class="t" style="top:857.96px;font-size:22.6px;line-height:29px;color:#1d63c5;letter-spacing:0.58px;left:118.00px;">outfitters</div>
<div class="r badge" style="left:436.0px;top:835.2px;background:#f9e19a;color:#9a5a14;">C</div>
<svg class="r" style="left:520px;top:837.3px" width="25" height="22" viewBox="0 0 25 22"><path d="M1.9 20.5V2.6H21.6V8.2" fill="none" stroke="#a8aab4" stroke-width="3.8" stroke-linejoin="round"/><path d="M0.2 1.5Q0.2 0.2 1.5 0.2H22.2Q23.5 0.2 23.5 1.5V5H0.2Z" fill="#a8aab4"/><path d="M1.9 18.6H10.4" stroke="#a8aab4" stroke-width="3.8"/><circle cx="16.9" cy="13.4" r="4.3" fill="none" stroke="#a8aab4" stroke-width="3.3"/><path d="M19.6 16.4L22.4 19.4" stroke="#a8aab4" stroke-width="3.2" stroke-linecap="round"/></svg>
<div class="r" style="left:557px;top:831.5px;width:1.7999999999999545px;height:31.5px;background:#b8bac2;"></div>
<div class="t" style="top:833.06px;font-size:22.6px;line-height:29px;color:#5a5d69;left:572.30px;">6</div>
<div class="r" style="left:572.5px;top:860.5px;width:13px;height:2px;background:repeating-linear-gradient(to right,#8a8c97 0 5px,transparent 5px 8.5px);"></div>
<div class="t" style="top:833.06px;font-size:22.6px;line-height:29px;color:#181a22;letter-spacing:-0.9px;left:613.20px;">27</div>
<div class="r" style="left:644.5px;top:838.1px;width:18.6px;height:18.6px;border-radius:50%;background:#80d6a2;"></div>
<div class="t" style="top:833.06px;font-size:22.6px;line-height:29px;color:#181a22;letter-spacing:-1.2px;right:797.00px;text-align:right;">15</div>
<div class="t" style="top:833.06px;font-size:22.6px;line-height:29px;color:#181a22;letter-spacing:-1.2px;right:630.40px;text-align:right;">6</div>
<div class="t" style="top:833.06px;font-size:22.6px;line-height:29px;color:#28795a;letter-spacing:-0.3px;right:551.00px;text-align:right;"><svg class="arr" width="15" height="17" viewBox="0 0 15 17"><path d="M7.5 16.6V2.3M1.4 8.3L7.5 2.2L13.6 8.3" fill="none" stroke="#28795a" stroke-width="1.7"/></svg>9</div>
<div class="t" style="top:833.06px;font-size:22.6px;line-height:29px;color:#181a22;letter-spacing:-0.8px;right:442.00px;text-align:right;">0.114%</div>
<div class="t" style="top:833.06px;font-size:22.6px;line-height:29px;color:#28795a;letter-spacing:-0.1px;right:339.00px;text-align:right;">+0.079</div>
<div class="t" style="top:833.06px;font-size:22.6px;line-height:29px;color:#181a22;letter-spacing:-0.3px;right:215.50px;text-align:right;">0.23</div>
<div class="t" style="top:833.06px;font-size:22.6px;line-height:29px;color:#28795a;letter-spacing:-0.1px;right:119.50px;text-align:right;">+0.16</div>
<div class="t" style="top:833.06px;font-size:22.6px;line-height:29px;color:#181a22;letter-spacing:-0.8px;right:18.00px;text-align:right;">170</div>
<div class="r" style="left:682px;top:172px;width:2px;height:740px;background:#e4e4ec;"></div>
<div class="r" style="left:1274px;top:172px;width:2px;height:740px;background:#e4e4ec;"></div>
<div class="r" style="left:1493px;top:172px;width:2px;height:740px;background:#e4e4ec;"></div>
<div class="r" style="left:423px;top:229px;width:639px;height:9.5px;border-radius:5px;background:rgba(0,0,8,0.263);"></div>
<svg class="r" style="left:0;top:0" width="1600" height="912" viewBox="0 0 1600 912">
<path d="M937.5 21 C908.46 80 909.4 136.38 957.6 177.56" fill="none" stroke="#b183f4" stroke-width="6.4"/>
<path d="M966.3 164.9 L983.5 194 L948.8 189.8 Z" fill="#b183f4"/>
<rect x="984.25" y="171.75" width="81.75" height="760" fill="none" stroke="#b183f4" stroke-width="9.5"/>
<rect x="979.5" y="236" width="91" height="9.5" fill="#b183f4"/>
</svg>
</body></html>
